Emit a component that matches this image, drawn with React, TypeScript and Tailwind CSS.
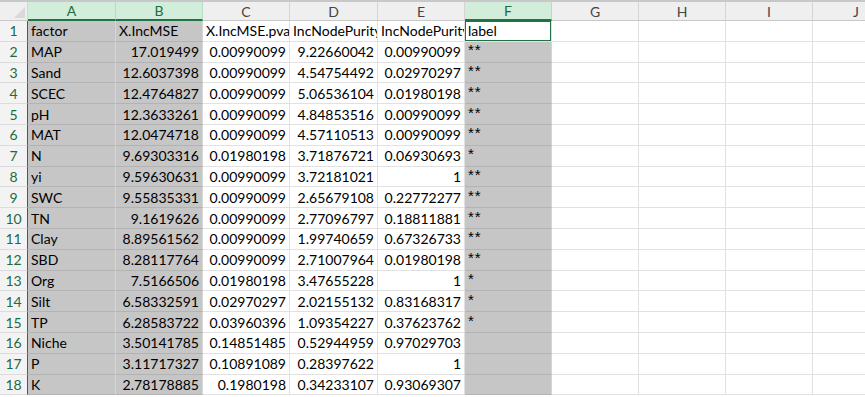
const FONT = "font-['Lato','Liberation_Sans',sans-serif]";

type Col = { key: string; w: string; sel: boolean };

// column letters, widths and whether the whole column is selected
const COLS: Col[] = [
  { key: "A", w: "w-[88px]", sel: true },
  { key: "B", w: "w-[87px]", sel: true },
  { key: "C", w: "w-[87px]", sel: false },
  { key: "D", w: "w-[88px]", sel: false },
  { key: "E", w: "w-[87px]", sel: false },
  { key: "F", w: "w-[87px]", sel: true },
  { key: "G", w: "w-[87px]", sel: false },
  { key: "H", w: "w-[87px]", sel: false },
  { key: "I", w: "w-[87px]", sel: false },
  { key: "J", w: "w-[87px]", sel: false },
];

const ROWS: string[][] = [
  ["factor", "X.IncMSE", "X.IncMSE.pvalue", "IncNodePurity", "IncNodePurity.pval", "label"],
  ["MAP", "17.019499", "0.00990099", "9.22660042", "0.00990099", "**"],
  ["Sand", "12.6037398", "0.00990099", "4.54754492", "0.02970297", "**"],
  ["SCEC", "12.4764827", "0.00990099", "5.06536104", "0.01980198", "**"],
  ["pH", "12.3633261", "0.00990099", "4.84853516", "0.00990099", "**"],
  ["MAT", "12.0474718", "0.00990099", "4.57110513", "0.00990099", "**"],
  ["N", "9.69303316", "0.01980198", "3.71876721", "0.06930693", "*"],
  ["yi", "9.59630631", "0.00990099", "3.72181021", "1", "**"],
  ["SWC", "9.55835331", "0.00990099", "2.65679108", "0.22772277", "**"],
  ["TN", "9.1619626", "0.00990099", "2.77096797", "0.18811881", "**"],
  ["Clay", "8.89561562", "0.00990099", "1.99740659", "0.67326733", "**"],
  ["SBD", "8.28117764", "0.00990099", "2.71007964", "0.01980198", "**"],
  ["Org", "7.5166506", "0.01980198", "3.47655228", "1", "*"],
  ["Silt", "6.58332591", "0.02970297", "2.02155132", "0.83168317", "*"],
  ["TP", "6.28583722", "0.03960396", "1.09354227", "0.37623762", "*"],
  ["Niche", "3.50141785", "0.14851485", "0.52944959", "0.97029703", ""],
  ["P", "3.11717327", "0.10891089", "0.28397622", "1", ""],
  ["K", "2.78178885", "0.1980198", "0.34233107", "0.93069307", ""],
];

const isNumber = (s: string) => /^[\d.]+$/.test(s);
const isStars = (s: string) => /^\*+$/.test(s);

function CornerCell() {
  return (
    <div className="relative w-[28px] shrink-0 border-r border-b border-r-[#d4d4d4] border-b-[#c8c8c8] bg-[#efefef]">
      <svg className="absolute right-[2px] bottom-[2px]" width="11" height="11" viewBox="0 0 11 11">
        <polygon points="11,0 11,11 0,11" fill="#d9d9d9" />
      </svg>
    </div>
  );
}

function ColumnHeader({ col }: { col: Col }) {
  return (
    <div
      className={
        col.sel
          ? `${col.w} shrink-0 flex items-center justify-center border-r border-r-[#b5dcc4] border-b-2 border-b-[#217346] bg-[#d3eddb] text-[#1d6b3f] text-[14px]`
          : `${col.w} shrink-0 flex items-center justify-center border-r border-r-[#d4d4d4] border-b border-b-[#c8c8c8] bg-[#efefef] text-[#444444] text-[14px]`
      }
    >
      {col.key}
    </div>
  );
}

function CellText({ value }: { value: string }) {
  // the significance stars sit a little higher and heavier than the body text
  if (isStars(value)) {
    return (
      <span className="font-['Liberation_Sans',sans-serif] text-[15px] tracking-[1px] leading-none -translate-y-[2px]">
        {value}
      </span>
    );
  }
  return <span>{value}</span>;
}

function Cell({ col, value, row }: { col: Col; value: string; row: number }) {
  const active = col.key === "F" && row === 1;
  const grey = col.sel && !active;
  const num = isNumber(value);
  const base = `${col.w} shrink-0 overflow-hidden whitespace-nowrap flex items-center text-[14px] text-black px-[3px] ${num ? "justify-end" : "justify-start"}`;

  if (active) {
    return (
      <div className={`${base} relative bg-white border-r border-b border-[#e1e1e1]`}>
        <div className="absolute inset-[-1px] border-2 border-[#217346] pointer-events-none" />
        <span className="relative">{value}</span>
      </div>
    );
  }
  if (grey) {
    return (
      <div className={`${base} bg-[#c6c6c6] border-r border-b border-r-[#d6d6d6] border-b-[#b3b3b3]`}>
        <CellText value={value} />
      </div>
    );
  }
  return (
    <div className={`${base} bg-white border-r border-b border-[#e1e1e1]`}>
      <CellText value={value} />
    </div>
  );
}

export default function App() {
  return (
    <div className={`w-[865px] h-[397px] overflow-hidden bg-white ${FONT}`}>
      <div className="flex h-[21px] border-t-2 border-t-[#c8c8c8]">
        <CornerCell />
        {COLS.map((c) => (
          <ColumnHeader key={c.key} col={c} />
        ))}
      </div>
      {ROWS.map((cells, i) => {
        const row = i + 1;
        return (
          <div key={row} className="flex h-[20.8px]">
            <div className="w-[28px] shrink-0 flex items-center justify-center border-r border-r-[#217346] border-b border-b-[#dcdcdc] bg-[#f3f3f3] text-[14px] text-[#1d6b3f]">
              {row}
            </div>
            {COLS.map((c, ci) => (
              <Cell key={c.key} col={c} row={row} value={cells[ci] ?? ""} />
            ))}
          </div>
        );
      })}
    </div>
  );
}
